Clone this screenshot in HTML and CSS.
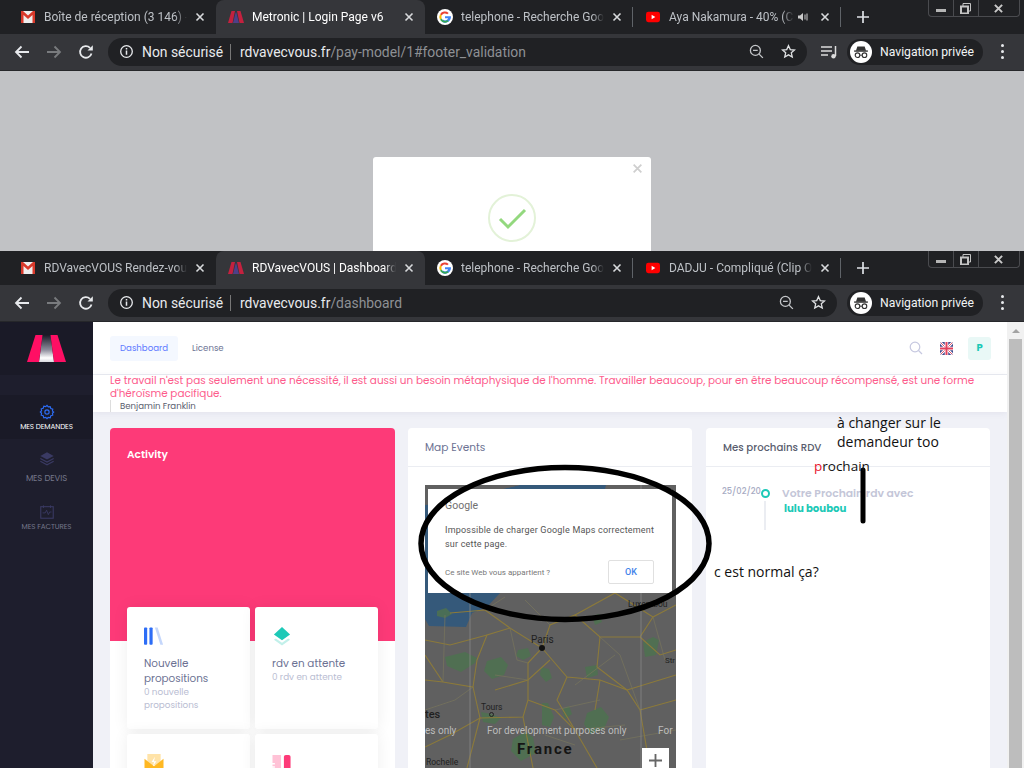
FILE: index.html
```html
<!DOCTYPE html>
<html lang="fr">
<head>
  <meta charset="UTF-8">
  <title>RDVavecVOUS | Dashboard</title>
  <link rel="stylesheet" href="styles.css">
</head>
<body>
  <svg class="defs" width="0" height="0">
    <defs>
      <symbol id="gmail" viewBox="0 0 14 12"><rect width="14" height="12" fill="#eee"/><path d="M0 0h2l5 4.500L12 0h2v12h-2.500V4L7 8 2.500 4v8H0z" fill="#d8392b"/></symbol>
      <symbol id="metronic" viewBox="0 0 16 12"><path d="M5 12 7.500 2 8 1l.500 1L11 12z" fill="#4f3f88"/><path d="M0 12 3.500 0H7L4.500 12z" fill="#c4213f"/><path d="M16 12 12.500 0H9l2.500 12z" fill="#c4213f"/></symbol>
      <symbol id="google" viewBox="0 0 16 16"><circle cx="8" cy="8" r="8" fill="#fff"/><path d="M13 7.300H8v1.900h3c-.4 1.300-1.500 2.200-3 2.200a3.400 3.400 0 0 1-2.200-.8l-1 2.200A6 6 0 0 0 14 8c0-.3 0-.5-.1-.7z" fill="#4285f4"/><path d="M3 5.200 4.700 6.500A3.500 3.500 0 0 1 10.200 5.300L11.700 3.900A5.800 5.800 0 0 0 3 5.200z" fill="#ea4335"/><path d="M3 5.200a5.800 5.800 0 0 0 0 5.600l1.700-1.300a3.500 3.500 0 0 1 0-3z" fill="#fbbc05"/><path d="M3 10.800A5.800 5.800 0 0 0 11.700 12.300L10.300 11A3.500 3.500 0 0 1 4.700 9.500z" fill="#34a853"/></symbol>
      <symbol id="youtube" viewBox="0 0 15 11"><rect width="15" height="11" rx="2.500" fill="#f00"/><path d="M6 3v5l4-2.500z" fill="#fff"/></symbol>
      <symbol id="close" viewBox="0 0 10 10"><path d="M1.500 1.500l7 7M8.500 1.500l-7 7" stroke="currentColor" stroke-width="1.600" fill="none"/></symbol>
      <symbol id="winx" viewBox="0 0 10 10"><path d="M1 1l8 8M9 1 1 9" stroke="currentColor" stroke-width="2.200" fill="none"/></symbol>
      <symbol id="winmax" viewBox="0 0 11 11"><path d="M3 3V.500h7.500V8H8" stroke="currentColor" fill="none"/><rect x="1" y="3.500" width="7" height="7" stroke="currentColor" stroke-width="2" fill="none"/></symbol>
      <symbol id="plus" viewBox="0 0 12 12"><path d="M6 0v12M0 6h12" stroke="currentColor" stroke-width="1.700" fill="none"/></symbol>
      <symbol id="back" viewBox="0 0 16 14"><path d="M15 7H2M7.500 1.500 2 7l5.500 5.500" stroke="currentColor" stroke-width="1.800" fill="none"/></symbol>
      <symbol id="forward" viewBox="0 0 16 14"><path d="M1 7h13M8.500 1.500 14 7l-5.500 5.500" stroke="currentColor" stroke-width="1.800" fill="none"/></symbol>
      <symbol id="reload" viewBox="0 0 16 16"><path d="M13.500 9.500A5.800 5.800 0 1 1 12 3.800" stroke="currentColor" stroke-width="1.800" fill="none"/><path d="M9.500 6.500h5.300V1.200z" fill="currentColor"/></symbol>
      <symbol id="info" viewBox="0 0 16 16"><circle cx="8" cy="8" r="6.200" stroke="currentColor" stroke-width="1.400" fill="none"/><path d="M8 7v4.500M8 4.300v1.500" stroke="currentColor" stroke-width="1.600"/></symbol>
      <symbol id="zoomout" viewBox="0 0 16 16"><circle cx="6.800" cy="6.800" r="5.300" stroke="currentColor" stroke-width="1.400" fill="none"/><path d="M4.300 6.800h5M10.800 10.800l4 4" stroke="currentColor" stroke-width="1.500"/></symbol>
      <symbol id="star" viewBox="0 0 16 16"><path d="M8 1.800l1.900 4.200 4.500.4-3.400 3 1 4.500L8 11.600l-4 2.300 1-4.500-3.400-3 4.500-.4z" stroke="currentColor" stroke-width="1.400" fill="none"/></symbol>
      <symbol id="incognito" viewBox="0 0 24 24"><circle cx="12" cy="12" r="12" fill="#fff"/><path d="M8 6h8l1.500 4.500h-11z" fill="#333"/><path d="M4.500 11h15" stroke="#333" stroke-width="1.500"/><circle cx="8.200" cy="15.500" r="2.500" fill="none" stroke="#333" stroke-width="1.200"/><circle cx="15.800" cy="15.500" r="2.500" fill="none" stroke="#333" stroke-width="1.200"/><path d="M10.700 15.500h2.600" stroke="#333"/></symbol>
    </defs>
  </svg>

  <!-- fenetre du dessus -->
  <section class="window window-top">
    <div class="tabstrip">
      <div class="tab"><svg class="favicon"><use href="#gmail"/></svg><span class="tab-title">Boîte de réception (3 146) -</span><svg class="tab-close"><use href="#close"/></svg></div>
      <div class="tab tab-active"><svg class="favicon"><use href="#metronic"/></svg><span class="tab-title">Metronic | Login Page v6</span><svg class="tab-close"><use href="#close"/></svg></div>
      <div class="tab tab-sep"><svg class="favicon favicon-round"><use href="#google"/></svg><span class="tab-title">telephone - Recherche Goo</span><svg class="tab-close"><use href="#close"/></svg></div>
      <div class="tab tab-sep"><svg class="favicon"><use href="#youtube"/></svg><span class="tab-title">Aya Nakamura - 40% (C</span><svg class="sound" viewBox="0 0 10 10"><path d="M0 3.500h2L5 1v8L2 6.500H0z" fill="#ccc"/><path d="M7 2.500v5M9 1.500v7" stroke="#ccc"/></svg><svg class="tab-close"><use href="#close"/></svg></div>
      <svg class="new-tab"><use href="#plus"/></svg>
      <div class="win-controls">
        <span class="win-btn"><i class="win-min"></i></span>
        <span class="win-btn"><svg class="win-max"><use href="#winmax"/></svg></span>
        <span class="win-btn win-btn-close"><svg class="win-x"><use href="#winx"/></svg></span>
      </div>
    </div>
    <div class="toolbar">
      <svg class="nav-icon"><use href="#back"/></svg>
      <svg class="nav-icon nav-off"><use href="#forward"/></svg>
      <svg class="nav-icon"><use href="#reload"/></svg>
      <div class="omnibox">
        <svg class="omni-icon"><use href="#info"/></svg>
        <span class="secure">Non sécurisé</span>
        <span class="url"><b>rdvavecvous.fr</b>/pay-model/1#footer_validation</span>
        <svg class="omni-right"><use href="#zoomout"/></svg>
        <svg class="omni-right omni-star"><use href="#star"/></svg>
      </div>
      <svg class="queue" viewBox="0 0 16 14"><path d="M0 2h11M0 6h11M0 10h7" stroke="#ddd" stroke-width="1.500"/><path d="M14.500 1v10" stroke="#ddd" stroke-width="1.500"/><circle cx="12.500" cy="11.300" r="2.200" fill="#ddd"/></svg>
      <div class="private"><svg class="private-icon"><use href="#incognito"/></svg><span>Navigation privée</span></div>
      <div class="dots"><i></i><i></i><i></i></div>
    </div>
    <div class="page-grey">
      <div class="modal">
        <svg class="modal-close"><use href="#close"/></svg>
        <svg class="check" viewBox="0 0 48 48"><circle cx="24" cy="24" r="23" fill="none" stroke="#e3f2d8" stroke-width="2"/><path d="M12 25l8 8 17-17" fill="none" stroke="#93d87e" stroke-width="3"/></svg>
      </div>
    </div>
  </section>

  <!-- fenetre du dessous -->
  <section class="window window-bottom">
    <div class="tabstrip">
      <div class="tab"><svg class="favicon"><use href="#gmail"/></svg><span class="tab-title">RDVavecVOUS Rendez-vou</span><svg class="tab-close"><use href="#close"/></svg></div>
      <div class="tab tab-active"><svg class="favicon"><use href="#metronic"/></svg><span class="tab-title">RDVavecVOUS | Dashboard</span><svg class="tab-close"><use href="#close"/></svg></div>
      <div class="tab tab-sep"><svg class="favicon favicon-round"><use href="#google"/></svg><span class="tab-title">telephone - Recherche Goo</span><svg class="tab-close"><use href="#close"/></svg></div>
      <div class="tab tab-sep"><svg class="favicon"><use href="#youtube"/></svg><span class="tab-title">DADJU - Compliqué (Clip O</span><svg class="tab-close"><use href="#close"/></svg></div>
      <svg class="new-tab"><use href="#plus"/></svg>
      <div class="win-controls">
        <span class="win-btn"><i class="win-min"></i></span>
        <span class="win-btn"><svg class="win-max"><use href="#winmax"/></svg></span>
        <span class="win-btn win-btn-close"><svg class="win-x"><use href="#winx"/></svg></span>
      </div>
    </div>
    <div class="toolbar">
      <svg class="nav-icon"><use href="#back"/></svg>
      <svg class="nav-icon nav-off"><use href="#forward"/></svg>
      <svg class="nav-icon"><use href="#reload"/></svg>
      <div class="omnibox omnibox-long">
        <svg class="omni-icon"><use href="#info"/></svg>
        <span class="secure">Non sécurisé</span>
        <span class="url"><b>rdvavecvous.fr</b>/dashboard</span>
        <svg class="omni-right"><use href="#zoomout"/></svg>
        <svg class="omni-right omni-star"><use href="#star"/></svg>
      </div>
      <div class="private"><svg class="private-icon"><use href="#incognito"/></svg><span>Navigation privée</span></div>
      <div class="dots"><i></i><i></i><i></i></div>
    </div>

    <div class="app">
      <aside class="sidebar">
        <div class="brand">
          <svg class="brand-logo" viewBox="0 0 39 27">
            <defs><linearGradient id="mid" x1="0" x2="0" y1="0" y2="1"><stop offset="0" stop-color="#1a1a27"/><stop offset=".55" stop-color="#8d8d9c"/><stop offset=".85" stop-color="#fff"/><stop offset="1" stop-color="#d8d8de"/></linearGradient></defs>
            <path d="M15.500 0h8L27 27H12z" fill="url(#mid)"/>
            <path d="M0 27 8.500 0h7L12 27z" fill="#ff0f64"/>
            <path d="M39 27 30.500 0h-7L27 27z" fill="#ff0f64"/>
          </svg>
        </div>
        <nav class="side-nav">
          <a class="side-item side-item-active">
            <svg class="side-icon" viewBox="0 0 18 18"><path d="M9 1.500l1.400 1.800 2.200-.4.700 2.200 2.200.7-.4 2.200L16.500 9l-1.400 1.400.4 2.200-2.200.7-.7 2.200-2.200-.4L9 16.500l-1.400-1.400-2.200.4-.7-2.200-2.200-.7.4-2.200L1.500 9l1.400-1.400-.4-2.200 2.200-.7.700-2.200 2.200.4z" fill="none" stroke="#2d6df6" stroke-width="1.300"/><circle cx="9" cy="9" r="2.400" fill="none" stroke="#2d6df6" stroke-width="1.300"/></svg>
            <span>MES DEMANDES</span>
          </a>
          <a class="side-item side-item-devis">
            <svg class="side-icon" viewBox="0 0 18 18"><path d="M9 1.500 16.500 5.500 9 9.500 1.500 5.500z" fill="#3a3a63"/><path d="M1.500 8.500 9 12.500l7.500-4M1.500 11.500 9 15.500l7.500-4" fill="none" stroke="#3a3a63" stroke-width="1.300"/></svg>
            <span>MES DEVIS</span>
          </a>
          <a class="side-item">
            <svg class="side-icon" viewBox="0 0 18 18"><rect x="2" y="3" width="14" height="13" fill="none" stroke="#3a3a63" stroke-width="1.200"/><path d="M5 1.500v3M13 1.500v3M4 10h3l1.500-3 2 5 1.500-3h2" fill="none" stroke="#3a3a63" stroke-width="1"/></svg>
            <span>MES FACTURES</span>
          </a>
        </nav>
      </aside>

      <div class="main">
        <header class="topbar">
          <div class="topnav">
            <a class="topnav-link topnav-active">Dashboard</a>
            <a class="topnav-link">License</a>
          </div>
          <div class="topbar-right">
            <svg class="search" viewBox="0 0 14 14"><circle cx="6" cy="6" r="4.800" fill="none" stroke="#c6c8e0" stroke-width="1.200"/><path d="M9.500 9.500l3.500 3.500" stroke="#c6c8e0" stroke-width="1.200"/></svg>
            <svg class="flag" viewBox="0 0 13 13"><defs><clipPath id="flagc"><rect width="13" height="13" rx="2"/></clipPath></defs><g clip-path="url(#flagc)"><rect width="13" height="13" fill="#3f4a8c"/><path d="M0 0l13 13M13 0 0 13" stroke="#fff" stroke-width="2.500"/><path d="M0 0l13 13M13 0 0 13" stroke="#e0566c" stroke-width="1"/><path d="M6.500 0v13M0 6.500h13" stroke="#fff" stroke-width="3.500"/><path d="M6.500 0v13M0 6.500h13" stroke="#e0405c" stroke-width="2"/></g></svg>
            <span class="avatar">P</span>
          </div>
        </header>
        <div class="quote">
          <p class="quote-text">Le travail n'est pas seulement une nécessité, il est aussi un besoin métaphysique de l'homme. Travailler beaucoup, pour en être beaucoup récompensé, est une forme d'héroïsme pacifique.</p>
          <p class="quote-author">Benjamin Franklin</p>
        </div>

        <div class="grid">
          <div class="card card-activity">
            <div class="activity-head">Activity</div>
            <div class="tiles">
              <div class="tile">
                <svg class="tile-icon" viewBox="0 0 22 20"><rect x="0" y="0" width="3.500" height="19" rx="1" fill="#2d6df6"/><rect x="6" y="0" width="3.500" height="19" rx="1" fill="#2d6df6"/><path d="M12 0h3l6 19h-3z" fill="#c5d7fb"/></svg>
                <div class="tile-title">Nouvelle propositions</div>
                <div class="tile-sub">0 nouvelle propositions</div>
              </div>
              <div class="tile">
                <svg class="tile-icon" viewBox="0 0 20 20"><path d="M10 0l8.500 8L10 14 1.500 8z" fill="#1dc9b7"/><path d="M1.500 13.500l8.500 6 8.500-6-2-1.500L10 16.500 3.500 12z" fill="#c2f0ea"/></svg>
                <div class="tile-title">rdv en attente</div>
                <div class="tile-sub">0 rdv en attente</div>
              </div>
              <div class="tile">
                <svg class="tile-icon" viewBox="0 0 20 20"><rect x="3" y="0" width="14" height="12" fill="#ffe3a8"/><path d="M0 5l10 8 10-8v15H0z" fill="#ffb822"/><path d="M11 3 7.500 8.500h2.500L9 13l3.500-5.500H10z" fill="#fff"/></svg>
              </div>
              <div class="tile">
                <svg class="tile-icon" viewBox="0 0 20 20"><path d="M0 1h9v19H0v-2h2.500v-1.500H0v-2h2.500V13H0v-2h2.500V9.500H0z" fill="#ffc2d6"/><rect x="12" y="1" width="7" height="19" rx="2" fill="#fd3a78"/></svg>
              </div>
            </div>
          </div>

          <div class="card card-map">
            <div class="card-head">Map Events</div>
            <div class="card-body map-body">
              <div class="map">
                <svg class="map-bg" viewBox="0 0 251 283" preserveAspectRatio="none">
                  <rect width="251" height="283" fill="#606060"/>
                  <path d="M95 0h86l-10 40-40 60L75 108 62 122 47 128 41 142 4 141 0 134V20L50 10z" fill="#35597a"/>
                  <path d="M0 0h95L50 10 0 20z" fill="#606060"/>
                  <g fill="#4e7250" opacity=".85"><path d="M20 172l20-5 12 6-2 5-14 9-14-6z"/><path d="M62 176l14-4 7 8-4 10-12 4-8-8z"/><path d="M93 165l10-2 3 8-8 4-7-4z"/><path d="M116 182l8 2 3 9-6 4-6-7z"/><path d="M160 182l12-2 1 10-11 3z"/><path d="M162 228l14-6 8 10-5 12-14 5-6-10z"/><path d="M117 218l6 0 6 14-4 10-8-2z"/><path d="M88 254l12-7 8 5 3 16-15 8-10-10z"/><path d="M218 157l10-5 6 3-3 15-11 2z"/><path d="M56 227l10 2 10 4-6 6-12-2z"/><path d="M12 126l9-3 6 6-7 4-8-2z"/><path d="M137 224l7-3 3 8-7 5z"/><path d="M167 131l7-2 3 8-7 3z"/></g>
                  <g fill="none" stroke="#8c7a3a" stroke-width="1.100"><path d="M117 163 85 143 62 150 52 175 48 202 18 197 0 195"/><path d="M117 163 125 140 150 130 175 152 215 152 228 132 251 120"/><path d="M117 163 142 192 175 195 202 205 215 225 225 283"/><path d="M117 163 103 178 103 215 98 232 55 233 25 250 0 262"/><path d="M175 152 172 182 202 205"/><path d="M85 143 60 125 25 128"/><path d="M103 215 130 225 150 245 172 283"/><path d="M98 232 108 283"/><path d="M55 233 42 283"/><path d="M215 225 251 215"/><path d="M202 205 251 190"/><path d="M142 192 132 215 150 245"/><path d="M48 202 55 233"/><path d="M18 197 0 170"/><path d="M215 152 235 170 251 165"/><path d="M175 195 170 225"/><path d="M150 130 190 108 228 132"/><path d="M62 150 25 160 0 155"/><path d="M70 205 103 195 125 175"/></g>
                  <g fill="none" stroke="#78755c" stroke-width=".7"><path d="M85 143 92 175 103 178M125 140 100 115M150 245 200 240M130 225 175 215M30 215 48 202M70 190 103 195M175 152 195 170 215 225M190 108 205 95M228 132 240 175M20 130 18 197M0 225 30 215M150 200 190 170M60 125 80 112M120 250 150 260M195 255 251 245"/></g>
                  <g fill="none" stroke="#8e8e8e" stroke-width=".7"><path d="M45 0v283M216 0v283"/></g>
                </svg>
                <span class="map-label map-paris">Paris</span>
                <span class="map-dot"></span>
                <span class="map-label map-tours">Tours</span>
                <span class="map-ring"></span>
                <span class="map-label map-tes">tes</span>
                <span class="map-label map-stra">Str</span>
                <span class="map-label map-lux">Luxembou</span>
                <span class="map-label map-rochelle">Rochelle</span>
                <span class="map-dev map-dev-a">es only</span>
                <span class="map-dev map-dev-b">For development purposes only</span>
                <span class="map-dev map-dev-c">For</span>
                <span class="map-france">France</span>
                <span class="map-zoom"><svg class="map-plus"><use href="#plus"/></svg></span>
                <div class="map-dialog">
                  <div class="dialog-logo">Google</div>
                  <p class="dialog-text">Impossible de charger Google Maps correctement sur cette page.</p>
                  <div class="dialog-foot">
                    <span class="dialog-link">Ce site Web vous appartient ?</span>
                    <span class="dialog-ok">OK</span>
                  </div>
                </div>
              </div>
            </div>
          </div>

          <div class="card card-rdv">
            <div class="card-head card-head-dark">Mes prochains RDV</div>
            <div class="card-body rdv-body">
              <span class="rdv-date">25/02/20</span>
              <div class="rdv-line"><i class="rdv-ring"></i><i class="rdv-bar"></i></div>
              <div class="rdv-text">
                <div class="rdv-title">Votre Prochain rdv avec</div>
                <div class="rdv-name">lulu boubou</div>
              </div>
            </div>
          </div>
        </div>
      </div>

      <div class="scrollbar"><span class="scroll-up"></span><span class="scroll-thumb"></span></div>
    </div>
  </section>

  <!-- annotations dessinees par dessus la capture -->
  <svg class="scribble" viewBox="0 0 1024 768">
    <ellipse cx="565" cy="543.500" rx="144" ry="76" fill="none" stroke="#000" stroke-width="5.500"/>
    <path d="M863 470V521" fill="none" stroke="#000" stroke-width="5" stroke-linecap="round"/>
  </svg>
  <div class="note note-change">à changer sur le<br>demandeur too</div>
  <div class="note note-next"><span class="note-red">p</span>rochain</div>
  <div class="note note-normal">c est normal ça?</div>
</body>
</html>
```

FILE: styles.css
```css
* {
  box-sizing: border-box;
}

body {
  margin: 0;
  width: 1024px;
  height: 768px;
  overflow: hidden;
  position: relative;
  font-family: "Open Sans", "Noto Sans", sans-serif;
  background: #202124;
}

.defs {
  position: absolute;
}

.window-top {
  height: 251px;
  overflow: hidden;
}

.window-bottom {
  height: 517px;
  overflow: hidden;
}

/* chrome */
.tabstrip {
  height: 34px;
  background: #202124;
  display: flex;
  align-items: center;
  padding-left: 8px;
  position: relative;
  color: #bdc1c6;
}

.tab {
  width: 208px;
  height: 34px;
  display: flex;
  align-items: center;
  padding: 0 10px 0 13px;
  font-family: "Roboto", sans-serif;
  font-size: 12px;
  position: relative;
  border-radius: 8px 8px 0 0;
}

.tab-active {
  background: #35363a;
  color: #fff;
  width: 209px;
}

.tab-sep::after {
  content: "";
  position: absolute;
  right: 0;
  top: 7px;
  height: 20px;
  width: 1px;
  background: #5f6368;
}

.favicon {
  width: 14px;
  height: 12px;
  flex: none;
  margin-right: 9px;
}

.tab-active .favicon {
  width: 16px;
  margin: 0 8px 0 -1px;
}

.favicon-round {
  width: 16px;
  height: 16px;
  margin-right: 8px;
  margin-left: -1px;
}

.tab-title {
  flex: 1;
  white-space: nowrap;
  overflow: hidden;
  margin-right: 8px;
  min-width: 0;
  -webkit-mask-image: linear-gradient(to right, #000 calc(100% - 12px), transparent);
  mask-image: linear-gradient(to right, #000 calc(100% - 12px), transparent);
}

.tab-close {
  width: 10px;
  height: 10px;
  flex: none;
  margin-right: 1px;
  color: #d8dadc;
}

.sound {
  width: 10px;
  height: 10px;
  flex: none;
  margin: 0 12px 0 -4px;
}

.new-tab {
  width: 12px;
  height: 12px;
  margin-left: 16px;
  color: #dee1e6;
}

.win-controls {
  position: absolute;
  top: 0;
  right: 4px;
  width: 92px;
  height: 17px;
  display: flex;
  border: 1px solid #4a4b4f;
  border-top: 0;
  border-radius: 0 0 4px 4px;
}

.win-btn {
  flex: 1;
  display: flex;
  align-items: center;
  justify-content: center;
  border-left: 1px solid #4a4b4f;
}

.win-btn:first-child {
  border-left: 0;
}

.win-btn-close {
  flex: 1.7;
}

.win-min {
  width: 10px;
  height: 3px;
  background: #b5b5b5;
  margin-top: 4px;
}

.win-max {
  width: 11px;
  height: 11px;
  color: #c4c4c4;
}

.win-x {
  width: 9px;
  height: 9px;
  color: #c9c9c9;
}

.toolbar {
  height: 37px;
  background: #35363a;
  display: flex;
  align-items: center;
  padding: 0 10px 1px 14px;
  color: #e8eaed;
  border-bottom: 1px solid #26272a;
}

.nav-icon {
  width: 16px;
  height: 16px;
  flex: none;
  margin-right: 16px;
  color: #e8eaed;
}

.nav-off {
  color: #797b7e;
}

.omnibox {
  width: 699px;
  height: 28px;
  border-radius: 14px;
  background: #202124;
  display: flex;
  align-items: center;
  padding: 0 11px;
  font-family: "Roboto", sans-serif;
  font-size: 13.9px;
  margin-left: -2px;
  margin-right: 14px;
}

.omnibox-long {
  width: 729px;
  margin-right: 10px;
}

.omni-icon {
  width: 15px;
  height: 15px;
  flex: none;
  margin-right: 8px;
}

.secure {
  padding-right: 7px;
  margin-right: 9px;
  border-right: 1px solid #777;
  line-height: 16px;
}

.url {
  flex: 1;
  color: #8e9094;
  white-space: nowrap;
}

.url b {
  font-weight: 400;
  color: #e8eaed;
}

.omni-right {
  width: 15px;
  height: 15px;
  flex: none;
  margin-left: 17px;
  color: #c4c6c9;
}

.omni-star {
  color: #e0e2e4;
}

.queue {
  width: 16px;
  height: 14px;
  flex: none;
  margin-right: 10px;
}

.private {
  height: 26px;
  width: 136px;
  flex: none;
  border-radius: 13px;
  background: #202124;
  display: flex;
  align-items: center;
  padding-left: 3px;
  font-family: "Roboto", sans-serif;
  font-size: 12.2px;
  color: #f1f3f4;
}

.private-icon {
  width: 22px;
  height: 22px;
  flex: none;
  margin-right: 8px;
}

.dots {
  margin-left: 18px;
  display: flex;
  flex-direction: column;
  gap: 3px;
}

.dots i {
  width: 3px;
  height: 3px;
  border-radius: 50%;
  background: #e8eaed;
}

/* page grise du dessus */
.page-grey {
  height: 180px;
  background: #c1c2c5;
  display: flex;
  justify-content: center;
  padding-top: 86px;
}

.modal {
  width: 278px;
  height: 120px;
  background: #fff;
  border-radius: 3px;
  position: relative;
  display: flex;
  justify-content: center;
  padding-top: 37px;
}

.modal-close {
  position: absolute;
  top: 6px;
  right: 8px;
  width: 11px;
  height: 11px;
  color: #cfcfcf;
}

.check {
  width: 48px;
  height: 48px;
}

/* dashboard */
.app {
  display: flex;
  height: 446px;
  font-family: "Poppins", "Inter", "Noto Sans", sans-serif;
}

.sidebar {
  width: 93px;
  flex: none;
  background: #1e1e2d;
}

.brand {
  height: 53px;
  background: #1a1a27;
  display: flex;
  justify-content: center;
  align-items: center;
}

.brand-logo {
  width: 39px;
  height: 27px;
}

.side-nav {
  padding-top: 20px;
}

.side-item {
  display: flex;
  flex-direction: column;
  align-items: center;
  height: 44px;
  gap: 2px;
  font-size: 7.2px;
  line-height: 10px;
  color: #75778a;
  letter-spacing: -.1px;
  margin-bottom: 9px;
}

.side-item-active {
  background: #1a1a27;
  color: #fff;
  padding-top: 9px;
  margin-bottom: 12px;
}

.side-item-devis {
  gap: 6px;
  font-size: 8.5px;
}

.side-icon {
  width: 16px;
  height: 16px;
  flex: none;
}

.main {
  flex: 1;
  min-width: 0;
  background: #f0f1f7;
  overflow: hidden;
}

.topbar {
  height: 53px;
  background: #fff;
  border-bottom: 1px solid #ebedf2;
  display: flex;
  align-items: center;
  justify-content: space-between;
  padding: 0 16px 0 17px;
}

.topnav {
  display: flex;
  gap: 4px;
  font-size: 8.6px;
}

.topnav-link {
  padding: 0 10px;
  line-height: 25px;
  color: #6c7293;
  border-radius: 3px;
}

.topnav-active {
  background: #f4f8ff;
  color: #5d78ff;
}

.topbar-right {
  display: flex;
  align-items: center;
}

.search {
  width: 14px;
  height: 14px;
  margin-right: 17px;
}

.flag {
  width: 13px;
  height: 13px;
  margin-right: 15px;
}

.avatar {
  width: 23px;
  height: 23px;
  background: #e9f8f6;
  color: #1dc9b7;
  border-radius: 3px;
  font-size: 10px;
  font-weight: 700;
  display: flex;
  align-items: center;
  justify-content: center;
}

.quote {
  height: 37px;
  background: #fff;
  padding-left: 17px;
  box-shadow: 0 1px 6px rgba(120, 120, 160, .12);
}

.quote-text {
  margin: 0;
  font-size: 10.43px;
  line-height: 12.5px;
  color: #fd5c8c;
}

.quote-author {
  margin: 0;
  border-left: 1px solid #ddd;
  padding-left: 9px;
  font-size: 8.6px;
  line-height: 12px;
  color: #595d6e;
}

.grid {
  display: flex;
  gap: 14px;
  padding: 16px 17px 0;
}

.card {
  background: #fff;
  border-radius: 4px;
  height: 400px;
  flex: none;
}

.card-activity {
  width: 285px;
  margin-right: -1px;
  background: linear-gradient(#fd3a78 213px, #fff 213px);
}

.activity-head {
  height: 179px;
  padding: 19px 17px;
  color: #fff;
  font-size: 10.6px;
  font-weight: 600;
}

.tiles {
  display: grid;
  grid-template-columns: 123px 123px;
  grid-auto-rows: 122px;
  gap: 5px;
  padding-left: 17px;
}

.tile {
  background: #fff;
  border-radius: 3px;
  padding: 20px 17px;
  box-shadow: 0 0 16px rgba(0, 0, 0, .07);
}

.tile-icon {
  display: block;
  width: 20px;
  height: 19px;
  margin-bottom: 10px;
}

.tile-title {
  font-size: 10.4px;
  line-height: 15px;
  color: #6c7293;
}

.tile-sub {
  font-size: 8.8px;
  line-height: 13px;
  color: #b9bdd2;
}

.card-map,
.card-rdv {
  width: 284px;
}

.card-head {
  height: 39px;
  padding: 2px 17px 0;
  display: flex;
  align-items: center;
  font-size: 10.6px;
  color: #6c7293;
  border-bottom: 1px solid #ebedf2;
}

.card-head-dark {
  color: #595d6e;
  font-size: 10.2px;
  font-weight: 500;
}

.map-body {
  padding: 18px 0 0 17px;
}

.map {
  width: 251px;
  height: 283px;
  position: relative;
  overflow: hidden;
}

.map-bg {
  display: block;
  width: 251px;
  height: 283px;
}

.map-label {
  position: absolute;
  font-family: "Roboto", sans-serif;
  font-size: 8.5px;
  color: #1f1f1f;
}

.map-paris {
  left: 106px;
  top: 149px;
  font-size: 10px;
}

.map-dot {
  position: absolute;
  left: 114px;
  top: 160px;
  width: 6px;
  height: 6px;
  border-radius: 50%;
  background: #111;
}

.map-tours {
  left: 56px;
  top: 217px;
}

.map-ring {
  position: absolute;
  left: 64px;
  top: 227px;
  width: 5px;
  height: 5px;
  border-radius: 50%;
  border: 1px solid #222;
}

.map-tes {
  left: 0;
  top: 223px;
  font-size: 11px;
  font-weight: 500;
}

.map-stra {
  left: 240px;
  top: 171px;
  font-size: 8px;
}

.map-lux {
  left: 203px;
  top: 114px;
}

.map-rochelle {
  left: 1px;
  top: 272px;
}

.map-dev {
  position: absolute;
  top: 240px;
  font-family: "Roboto", sans-serif;
  font-size: 10px;
  color: #bcbcbc;
  white-space: nowrap;
}

.map-dev-a {
  left: 0;
}

.map-dev-b {
  left: 62px;
}

.map-dev-c {
  left: 233px;
}

.map-france {
  position: absolute;
  left: 92px;
  top: 255px;
  font-family: "Roboto", sans-serif;
  font-size: 15px;
  font-weight: 700;
  letter-spacing: 1.8px;
  color: #151515;
}

.map-zoom {
  position: absolute;
  right: 7px;
  bottom: 0;
  width: 27px;
  height: 20px;
  background: #fff;
  padding: 6px 0 0 7px;
}

.map-plus {
  display: block;
  width: 13px;
  height: 13px;
  color: #666;
}

.map-dialog {
  position: absolute;
  left: 3px;
  top: 4px;
  width: 244px;
  height: 104px;
  background: #fff;
  padding: 11px 18px 0 17px;
  font-family: "Roboto", sans-serif;
  color: #444;
}

.dialog-logo {
  font-size: 10.5px;
  color: #6f6f6f;
  line-height: 12px;
}

.dialog-text {
  margin: 11px -8px 0 0;
  font-size: 9px;
  letter-spacing: .2px;
  line-height: 14px;
  color: #555;
}

.dialog-foot {
  display: flex;
  align-items: center;
  justify-content: space-between;
  margin-top: 9px;
}

.dialog-link {
  font-size: 8px;
  color: #777;
}

.dialog-ok {
  width: 46px;
  height: 24px;
  border: 1px solid #e0e0e0;
  border-radius: 2px;
  color: #3f83ea;
  font-size: 9px;
  font-weight: 500;
  display: flex;
  align-items: center;
  justify-content: center;
}

.rdv-body {
  padding: 18px 0 0 16px;
  display: flex;
}

.rdv-date {
  width: 37px;
  flex: none;
  font-size: 8.3px;
  font-weight: 500;
  line-height: 12px;
  color: #a7abc3;
  white-space: nowrap;
}

.rdv-line {
  width: 10px;
  margin: 4px 0 0 1px;
  display: flex;
  flex-direction: column;
  align-items: center;
}

.rdv-ring {
  width: 9px;
  height: 9px;
  border: 2px solid #1dc9b7;
  border-radius: 50%;
}

.rdv-bar {
  width: 2px;
  height: 29px;
  background: #ebedf2;
  margin-top: 3px;
}

.rdv-text {
  padding: 3px 0 0 12px;
  font-size: 10.8px;
  font-weight: 600;
}

.rdv-title {
  color: #c4c6d8;
  line-height: 12px;
}

.rdv-name {
  color: #1dc9b7;
  margin: 2px 0 0 2px;
  font-size: 10.2px;
  line-height: 14px;
  font-weight: 700;
}

.scrollbar {
  width: 17px;
  flex: none;
  background: #f1f1f1;
  padding: 0 2px;
  display: flex;
  flex-direction: column;
  align-items: center;
}

.scroll-up {
  flex: none;
  margin-top: 7px;
  border: 4px solid transparent;
  border-top: 0;
  border-bottom: 4px solid #a3a3a3;
  margin-bottom: 6px;
}

.scroll-thumb {
  width: 13px;
  flex: 1;
  background: #bdbdbd;
}

/* annotations */
.scribble {
  position: absolute;
  left: 0;
  top: 0;
  width: 1024px;
  height: 768px;
  pointer-events: none;
}

.note {
  position: absolute;
  font-family: "Open Sans", sans-serif;
  font-size: 14px;
  line-height: 19px;
  color: #111;
  white-space: nowrap;
}

.note-change {
  left: 837px;
  top: 413px;
}

.note-next {
  left: 814px;
  top: 457px;
  font-size: 13.5px;
}

.note-red {
  color: #e8112d;
}

.note-normal {
  left: 714px;
  top: 562px;
}
```
